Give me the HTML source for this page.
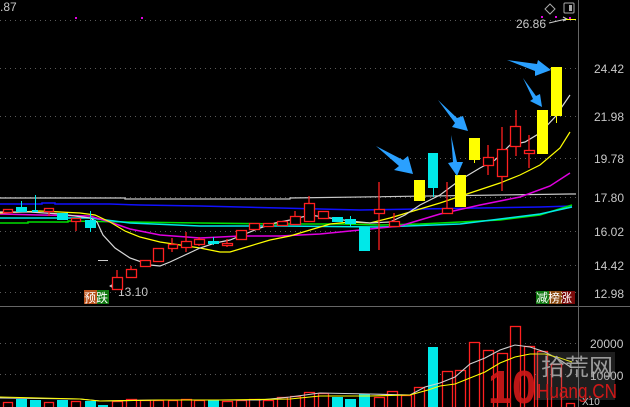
<!DOCTYPE html>
<html><head><meta charset="utf-8"><style>
html,body{margin:0;padding:0;background:#000;overflow:hidden}
svg{display:block}
text{font-family:"Liberation Sans","Noto Sans CJK SC",sans-serif}
</style></head><body>
<svg width="630" height="407" viewBox="0 0 630 407" xmlns="http://www.w3.org/2000/svg">
<rect width="630" height="407" fill="#000"/>
<g stroke="#5a5a5a" stroke-dasharray="1,4" stroke-width="1">
<line x1="0" y1="20.5" x2="578" y2="20.5"/>
<line x1="0" y1="68.5" x2="578" y2="68.5"/>
<line x1="0" y1="116.5" x2="578" y2="116.5"/>
<line x1="0" y1="158.5" x2="578" y2="158.5"/>
<line x1="0" y1="197.5" x2="578" y2="197.5"/>
<line x1="0" y1="231.5" x2="578" y2="231.5"/>
<line x1="0" y1="265.5" x2="578" y2="265.5"/>
<line x1="0" y1="292.5" x2="578" y2="292.5"/>
<line x1="0" y1="343.5" x2="578" y2="343.5"/>
<line x1="0" y1="374.5" x2="578" y2="374.5"/>
</g>
<line x1="578.5" y1="0" x2="578.5" y2="407" stroke="#666"/>
<line x1="0" y1="306.5" x2="630" y2="306.5" stroke="#666"/>
<g fill="#c8c8c8" font-size="12">
<text x="594" y="73">24.42</text>
<text x="594" y="121">21.98</text>
<text x="594" y="163">19.78</text>
<text x="594" y="202">17.80</text>
<text x="594" y="236">16.02</text>
<text x="594" y="270">14.42</text>
<text x="594" y="298">12.98</text>
<text x="590" y="348">20000</text>
<text x="590" y="380">10000</text>
<text x="582" y="405" font-size="10">X10</text>
<text x="0" y="11">.87</text>
<text x="516" y="28">26.86</text>
<text x="118" y="296">13.10</text>
</g>
<path d="M550 4 L555 9 L550 14 L545 9 Z" fill="none" stroke="#aaa"/>
<rect x="564" y="3" width="10" height="10" rx="1" fill="none" stroke="#aaa"/>
<rect x="569" y="5" width="3" height="6" fill="#aaa"/>
<g fill="#e000e0"><rect x="75" y="17" width="2" height="2"/><rect x="141" y="17" width="2" height="2"/><rect x="541" y="16" width="2" height="2"/><rect x="555" y="16" width="2" height="2"/><rect x="569" y="17" width="2" height="2"/></g>
<path d="M549 23 L566 19" stroke="#ccc" fill="none"/>
<path d="M563 17 L567 19 L563 21" stroke="#ccc" fill="none"/>
<line x1="566" y1="19.5" x2="576" y2="19.5" stroke="#ff0"/>
<path d="M115 289 L110 286 L115 283 M110 286 L120 286" stroke="#ccc" fill="none"/>
<line x1="98" y1="260.5" x2="108" y2="260.5" stroke="#ccc"/>
<g fill="none" stroke-width="1.2">
<polyline stroke="#c8c8c8" points="0,198 125,198 125,199 290,199 290,198 570,194 576,194"/>
<polyline stroke="#1010ff" stroke-width="1.5" points="0,204 42,204 42,203 55,203 55,204 110,204 140,205 200,206 280,208 360,210 420,209 480,208 540,207 572,206"/>
<polyline stroke="#00e000" stroke-width="1.5" points="0,223 28,223 28,222 68,222 68,221 130,222 200,223 280,224 340,224 380,225 420,224 460,222 500,220 540,215 572,205"/>
<polyline stroke="#00e8e8" stroke-width="1.5" points="0,218 90,218 130,223 200,226 280,226 380,227 460,224 540,214 572,207"/>
<polyline stroke="#e000e0" stroke-width="1.5" points="0,214 40,215 90,216 110,222 130,229 160,235 200,238 240,236 280,236 320,234 360,230 400,226 440,214 480,205 520,197 550,186 570,173"/>
<polyline stroke="#ffff00" points="0,213 40,211 80,213 95,215 110,222 125,231 140,237 160,242 180,245 200,248 220,252 230,252 250,246 270,240 290,236 310,230 330,224 350,222 370,223 390,218 410,212 440,203 470,193 500,183 520,175 540,165 560,148 570,132"/>
<polyline stroke="#d8d8d8" points="0,212 30,212 60,214 90,218 97,222 103,235 115,248 130,258 150,265 160,266 170,262 185,255 200,248 215,243 230,240 245,234 260,228 275,223 290,220 310,215 330,218 350,221 370,223 390,222 405,215 420,205 440,195 460,180 480,168 495,160 510,145 525,142 540,133 555,117 570,95"/>
</g>
<g stroke="#ff2020" fill="#000" stroke-width="1.3">
<rect x="3.5" y="209.5" width="9" height="3"/>
<line x1="49" y1="211" x2="49" y2="216"/><rect x="44.5" y="208.5" width="9" height="3"/>
<line x1="76" y1="221" x2="76" y2="231"/><rect x="71.5" y="218.5" width="9" height="3"/>
<line x1="117" y1="270" x2="117" y2="277"/><rect x="112.5" y="277.5" width="10" height="12"/>
<line x1="131" y1="266" x2="131" y2="269"/><rect x="126.5" y="269.5" width="10" height="8"/>
<rect x="140.5" y="260.5" width="10" height="6"/>
<rect x="153.5" y="248.5" width="10" height="13"/>
<line x1="172" y1="238" x2="172" y2="252"/><rect x="168.5" y="244.5" width="9" height="4"/>
<line x1="186" y1="232" x2="186" y2="252"/><rect x="181.5" y="241.5" width="10" height="6"/>
<line x1="199" y1="237" x2="199" y2="246"/><rect x="194.5" y="239.5" width="10" height="5"/>
<line x1="227" y1="239" x2="227" y2="247"/><rect x="222.5" y="243.5" width="10" height="2"/>
<rect x="236.5" y="230.5" width="10" height="9"/>
<rect x="249.5" y="223.5" width="10" height="6"/>
<rect x="263.5" y="223.5" width="10" height="3"/>
<rect x="277.5" y="221.5" width="10" height="4"/>
<line x1="295" y1="211" x2="295" y2="216"/><rect x="290.5" y="216.5" width="10" height="8"/>
<line x1="309" y1="196" x2="309" y2="203"/><rect x="304.5" y="203.5" width="10" height="18"/>
<rect x="318.5" y="211.5" width="10" height="7"/>
<line x1="379" y1="182" x2="379" y2="250"/><rect x="374.5" y="209.5" width="10" height="4"/>
<line x1="394" y1="213" x2="394" y2="221"/><rect x="389.5" y="221.5" width="10" height="5"/>
<line x1="447" y1="182" x2="447" y2="208"/><rect x="442.5" y="208.5" width="10" height="5"/>
<line x1="488" y1="145" x2="488" y2="175"/><rect x="483.5" y="157.5" width="10" height="8"/>
<line x1="502" y1="127" x2="502" y2="191"/><rect x="497.5" y="149.5" width="10" height="27"/>
<line x1="516" y1="110" x2="516" y2="156"/><rect x="510.5" y="126.5" width="10" height="20"/>
<line x1="529" y1="135" x2="529" y2="168"/><rect x="524.5" y="150.5" width="10" height="3"/>
</g>
<g fill="#00e8e8">
<rect x="16" y="207" width="11" height="5"/><rect x="21" y="201" width="1" height="6"/>
<rect x="35" y="195" width="1" height="17"/><rect x="32" y="210" width="6" height="2"/>
<rect x="57" y="213" width="11" height="7"/>
<rect x="85" y="220" width="11" height="8"/><rect x="90" y="211" width="1" height="21"/>
<rect x="208" y="241" width="11" height="3"/><rect x="213" y="237" width="1" height="8"/>
<rect x="332" y="217" width="11" height="5"/><rect x="345" y="219" width="11" height="5"/><rect x="350" y="216" width="1" height="10"/>
<rect x="359" y="227" width="11" height="24"/>
<rect x="428" y="153" width="10" height="35"/><rect x="433" y="188" width="1" height="9"/>
</g>
<g fill="#ffff00">
<rect x="414" y="180" width="11" height="21"/>
<rect x="455" y="175" width="11" height="32"/>
<rect x="469" y="138" width="11" height="22"/><rect x="474" y="160" width="1" height="3"/>
<rect x="537" y="110" width="11" height="44"/>
<rect x="551" y="67" width="11" height="49"/><rect x="556" y="116" width="1" height="7"/>
</g>
<g fill="#2aa0ff">
<path d="M376 146 L403 160 L408 156 L413 174 L394 170 L399 166 Z"/>
<path d="M438 100 L457 118 L463 116 L468 131 L452 127 L455 123 Z"/>
<path d="M451 135 L457 162 L463 162 L457 176 L448 163 L453 162 Z"/>
<path d="M507 60 L537 64 L538 60 L551 70 L535 76 L535 71 Z"/>
<path d="M523 78 L536 96 L540 94 L542 107 L530 101 L533 99 Z"/>
</g>
<rect x="84" y="290" width="13" height="14" fill="#b8501a"/><rect x="97" y="290" width="12" height="14" fill="#107810"/>
<text x="84" y="302" font-size="12" fill="#fff">预跌</text>
<rect x="536" y="291" width="13" height="13" fill="#107810"/><rect x="549" y="291" width="13" height="13" fill="#8a4a10"/><rect x="562" y="291" width="13" height="13" fill="#7a0a0a"/>
<text x="536" y="302" font-size="12" fill="#fff">减榜涨</text>
<g stroke="#ff2020" fill="#000" stroke-width="1.3">
<rect x="3.5" y="402.5" width="9" height="6"/>
<rect x="44.5" y="402.5" width="9" height="6"/>
<rect x="71.5" y="401.5" width="9" height="7"/>
<rect x="112.5" y="401.5" width="10" height="7"/>
<rect x="126.5" y="399.5" width="10" height="9"/>
<rect x="140.5" y="400.5" width="10" height="8"/>
<rect x="153.5" y="400.5" width="10" height="8"/>
<rect x="168.5" y="400.5" width="9" height="8"/>
<rect x="181.5" y="399.5" width="10" height="9"/>
<rect x="194.5" y="400.5" width="10" height="8"/>
<rect x="222.5" y="401.5" width="10" height="7"/>
<rect x="236.5" y="400.5" width="10" height="8"/>
<rect x="249.5" y="399.5" width="10" height="9"/>
<rect x="263.5" y="400.5" width="10" height="8"/>
<rect x="277.5" y="397.5" width="10" height="11"/>
<rect x="290.5" y="396.5" width="10" height="12"/>
<rect x="304.5" y="392.5" width="10" height="16"/>
<rect x="318.5" y="393.5" width="10" height="15"/>
<rect x="374.5" y="397.5" width="10" height="11"/>
<rect x="387.5" y="391.5" width="10" height="17"/>
<rect x="401.5" y="395.5" width="10" height="13"/>
<rect x="414.5" y="387.5" width="10" height="21"/>
<rect x="442.5" y="371.5" width="10" height="37"/>
<rect x="455.5" y="370.5" width="10" height="38"/>
<rect x="469.5" y="342.5" width="10" height="66"/>
<rect x="483.5" y="350.5" width="10" height="58"/>
<rect x="497.5" y="353.5" width="10" height="55"/>
<rect x="510.5" y="326.5" width="10" height="82"/>
<rect x="524.5" y="346.5" width="10" height="62"/>
<rect x="537.5" y="351.5" width="10" height="57"/>
<rect x="551.5" y="364.5" width="10" height="44"/>
<rect x="566.5" y="403.5" width="8" height="5"/>
</g>
<g fill="#00e8e8">
<rect x="16" y="399" width="11" height="8"/>
<rect x="30" y="400" width="11" height="7"/>
<rect x="57" y="400" width="11" height="7"/>
<rect x="85" y="401" width="11" height="6"/>
<rect x="98" y="405" width="10" height="2"/>
<rect x="208" y="400" width="11" height="7"/>
<rect x="332" y="397" width="11" height="10"/>
<rect x="345" y="399" width="11" height="8"/>
<rect x="359" y="394" width="11" height="13"/>
<rect x="428" y="347" width="10" height="60"/>
</g>
<g fill="none" stroke-width="1.1">
<polyline stroke="#d0d0d0" points="0,398 80,399 100,401 160,400 200,400 260,400 290,397 320,393 370,394 410,395 425,387 440,383 455,377 470,364 485,358 500,350 515,345 530,347 545,352 560,360 572,368"/>
<polyline stroke="#ffff00" points="0,397 80,399 100,401 160,400 220,400 290,399 320,396 370,396 410,395 428,390 440,386 455,384 470,378 485,372 500,363 515,357 530,354 545,354 560,358 572,362"/>
</g>
<rect x="535" y="352" width="80" height="48" fill="#777" fill-opacity="0.25"/>
<text x="488" y="403" font-size="46" font-weight="bold" fill="#d01818" fill-opacity="0.9" textLength="48" lengthAdjust="spacingAndGlyphs">10</text>
<text x="541" y="375" font-size="23" fill="#a8a8a8" fill-opacity="0.9" textLength="72" lengthAdjust="spacingAndGlyphs">拾荒网</text>
<text x="537" y="398" font-size="20" fill="#d01818" textLength="80" lengthAdjust="spacingAndGlyphs">Huang.CN</text>
</svg>
</body></html>
